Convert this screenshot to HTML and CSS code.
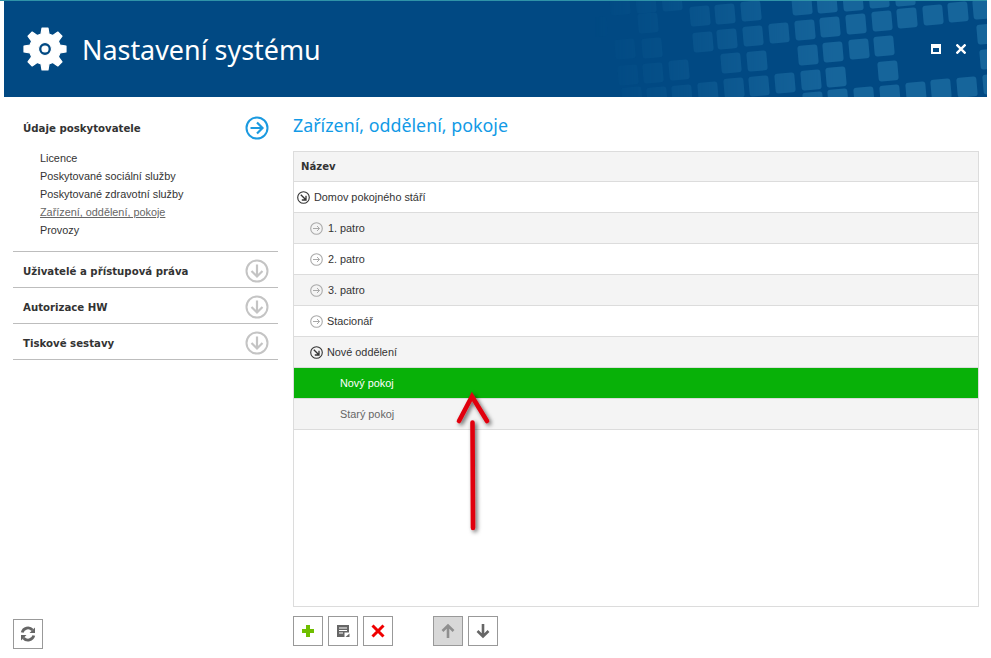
FILE: index.html
```html
<!DOCTYPE html>
<html lang="cs">
<head>
<meta charset="utf-8">
<title>Nastavení systému</title>
<link rel="stylesheet" href="styles.css">
</head>
<body>
<header class="header">
  <svg class="pattern" width="983" height="96" viewBox="4 1 983 96" aria-hidden="true">
    <defs><rect id="sq" x="-10" y="-10" width="20" height="20" rx="3" transform="rotate(-5)"/></defs>
    <g fill="#16659b">
      <use href="#sq" x="597" y="27"/><use href="#sq" x="620" y="5"/><use href="#sq" x="646" y="3"/><use href="#sq" x="672" y="1"/>
      <use href="#sq" x="648" y="23"/><use href="#sq" x="625" y="49"/><use href="#sq" x="652" y="48"/>
      <use href="#sq" x="628" y="75"/><use href="#sq" x="653" y="73"/><use href="#sq" x="679" y="70"/>
      <use href="#sq" x="632" y="97"/><use href="#sq" x="657" y="97"/><use href="#sq" x="682" y="95"/><use href="#sq" x="708" y="92"/><use href="#sq" x="734" y="88"/>
      <use href="#sq" x="700" y="16"/><use href="#sq" x="725" y="14"/><use href="#sq" x="751" y="11"/>
      <use href="#sq" x="802" y="5"/><use href="#sq" x="827" y="3"/><use href="#sq" x="853" y="1"/><use href="#sq" x="879" y="-2"/><use href="#sq" x="905" y="-4"/>
      <use href="#sq" x="805" y="30"/><use href="#sq" x="830" y="27"/><use href="#sq" x="856" y="24"/><use href="#sq" x="882" y="21"/><use href="#sq" x="907" y="18"/><use href="#sq" x="933" y="15"/><use href="#sq" x="958" y="12"/><use href="#sq" x="983" y="9"/>
      <use href="#sq" x="703" y="42"/><use href="#sq" x="727" y="39"/><use href="#sq" x="753" y="36"/><use href="#sq" x="779" y="33"/><use href="#sq" x="987" y="34"/>
      <use href="#sq" x="808" y="55"/><use href="#sq" x="833" y="52"/><use href="#sq" x="859" y="49"/><use href="#sq" x="884" y="46"/><use href="#sq" x="990" y="59"/>
      <use href="#sq" x="731" y="63"/><use href="#sq" x="757" y="61"/><use href="#sq" x="888" y="71"/>
      <use href="#sq" x="759" y="86"/><use href="#sq" x="785" y="83"/><use href="#sq" x="811" y="80"/><use href="#sq" x="836" y="77"/>
      <use href="#sq" x="813" y="102"/><use href="#sq" x="838" y="99"/><use href="#sq" x="864" y="97"/><use href="#sq" x="890" y="95"/><use href="#sq" x="916" y="92"/><use href="#sq" x="941" y="89"/><use href="#sq" x="967" y="87"/><use href="#sq" x="993" y="84"/>
    </g>
  </svg>
  <svg class="gear" width="44" height="44" viewBox="0 0 44 44" aria-hidden="true">
    <path fill="#fff" stroke="#fff" stroke-width="1.200" stroke-linejoin="round" fill-rule="evenodd" d="M19 1h6l1 6 3.800 1.600 5-3.600 4.200 4.200-3.600 5 1.600 3.800 6 1v6l-6 1-1.600 3.800 3.600 5-4.200 4.200-5-3.600-3.800 1.600-1 6h-6l-1-6-3.800-1.600-5 3.600-4.200-4.200 3.600-5-1.600-3.800-6-1v-6l6-1 1.600-3.800-3.600-5 4.200-4.200 5 3.600 3.800-1.600zM22 15.500a6.500 6.500 0 1 0 0 13 6.500 6.500 0 0 0 0-13zM22 19a3 3 0 1 1 0 6 3 3 0 0 1 0-6z"/>
  </svg>
  <h1 class="title">Nastavení systému</h1>
  <div class="window-buttons">
    <svg width="10" height="10" viewBox="0 0 10 10" aria-hidden="true"><path fill="#fff" fill-rule="evenodd" d="M0 0h10v10H0zM2 4v4h6V4z"/></svg>
    <svg width="10" height="10" viewBox="0 0 10 10" aria-hidden="true"><path stroke="#fff" stroke-width="2.400" d="M.5.5l9 9M9.500.5l-9 9"/></svg>
  </div>
</header>
<div class="body">
  <aside class="sidebar">
    <nav class="menu">
      <section class="group open">
        <div class="group-head">
          <span class="group-title">Údaje poskytovatele</span>
          <svg class="round" width="24" height="24" viewBox="0 0 24 24" aria-hidden="true"><circle cx="12" cy="12" r="10.500" fill="none" stroke="#1b9ae0" stroke-width="2"/><path fill="none" stroke="#1b9ae0" stroke-width="2.200" d="M5.500 12h12M12 6.500l5.500 5.500-5.500 5.500"/></svg>
        </div>
        <ul class="sublist">
          <li>Licence</li>
          <li>Poskytované sociální služby</li>
          <li>Poskytované zdravotní služby</li>
          <li class="current">Zařízení, oddělení, pokoje</li>
          <li>Provozy</li>
        </ul>
      </section>
      <section class="group">
        <div class="group-head">
          <span class="group-title">Uživatelé a přístupová práva</span>
          <svg class="round" width="24" height="24" viewBox="0 0 24 24" aria-hidden="true"><circle cx="12" cy="12" r="10.500" fill="none" stroke="#c4c4c4" stroke-width="2"/><path fill="none" stroke="#c4c4c4" stroke-width="2.200" d="M12 5.500v12M6.500 12l5.500 5.500 5.500-5.500"/></svg>
        </div>
      </section>
      <section class="group">
        <div class="group-head">
          <span class="group-title">Autorizace HW</span>
          <svg class="round" width="24" height="24" viewBox="0 0 24 24" aria-hidden="true"><circle cx="12" cy="12" r="10.500" fill="none" stroke="#c4c4c4" stroke-width="2"/><path fill="none" stroke="#c4c4c4" stroke-width="2.200" d="M12 5.500v12M6.500 12l5.500 5.500 5.500-5.500"/></svg>
        </div>
      </section>
      <section class="group">
        <div class="group-head">
          <span class="group-title">Tiskové sestavy</span>
          <svg class="round" width="24" height="24" viewBox="0 0 24 24" aria-hidden="true"><circle cx="12" cy="12" r="10.500" fill="none" stroke="#c4c4c4" stroke-width="2"/><path fill="none" stroke="#c4c4c4" stroke-width="2.200" d="M12 5.500v12M6.500 12l5.500 5.500 5.500-5.500"/></svg>
        </div>
      </section>
    </nav>
    <button class="tool refresh" type="button" aria-label="Obnovit">
      <svg width="18" height="18" viewBox="0 0 18 18" aria-hidden="true"><g fill="none" stroke="#666" stroke-width="2.800"><path d="M3.200 7.500A6 6 0 0 1 13.500 5"/><path d="M14.800 10.500A6 6 0 0 1 4.500 13"/></g><path fill="#666" d="M16 2.500v5.500h-5.500zM2 15.500V10h5.500z"/></svg>
    </button>
  </aside>
  <main class="content">
    <h2 class="page-title">Zařízení, oddělení, pokoje</h2>
    <div class="tree">
      <div class="tree-head">Název</div>
      <div class="row white">
        <svg class="node" width="13" height="13" viewBox="0 0 13 13" aria-hidden="true"><circle cx="6.500" cy="6.500" r="5.800" fill="none" stroke="#333" stroke-width="1.100"/><path fill="none" stroke="#333" stroke-width="1.300" d="M3.800 3.800l5 5M9 4.800V9H4.800"/></svg>
        <span>Domov pokojného stáří</span>
      </div>
      <div class="row level1 grey">
        <svg class="node" width="13" height="13" viewBox="0 0 13 13" aria-hidden="true"><circle cx="6.500" cy="6.500" r="5.800" fill="none" stroke="#aaa" stroke-width="1.100"/><path fill="none" stroke="#aaa" stroke-width="1" d="M3 6.500h6.500M7 4l2.500 2.500L7 9"/></svg>
        <span class="gap">1. patro</span>
      </div>
      <div class="row level1 white">
        <svg class="node" width="13" height="13" viewBox="0 0 13 13" aria-hidden="true"><circle cx="6.500" cy="6.500" r="5.800" fill="none" stroke="#aaa" stroke-width="1.100"/><path fill="none" stroke="#aaa" stroke-width="1" d="M3 6.500h6.500M7 4l2.500 2.500L7 9"/></svg>
        <span class="gap">2. patro</span>
      </div>
      <div class="row level1 grey">
        <svg class="node" width="13" height="13" viewBox="0 0 13 13" aria-hidden="true"><circle cx="6.500" cy="6.500" r="5.800" fill="none" stroke="#aaa" stroke-width="1.100"/><path fill="none" stroke="#aaa" stroke-width="1" d="M3 6.500h6.500M7 4l2.500 2.500L7 9"/></svg>
        <span class="gap">3. patro</span>
      </div>
      <div class="row level1 white">
        <svg class="node" width="13" height="13" viewBox="0 0 13 13" aria-hidden="true"><circle cx="6.500" cy="6.500" r="5.800" fill="none" stroke="#aaa" stroke-width="1.100"/><path fill="none" stroke="#aaa" stroke-width="1" d="M3 6.500h6.500M7 4l2.500 2.500L7 9"/></svg>
        <span>Stacionář</span>
      </div>
      <div class="row level1 grey">
        <svg class="node" width="13" height="13" viewBox="0 0 13 13" aria-hidden="true"><circle cx="6.500" cy="6.500" r="5.800" fill="none" stroke="#333" stroke-width="1.100"/><path fill="none" stroke="#333" stroke-width="1.300" d="M3.800 3.800l5 5M9 4.800V9H4.800"/></svg>
        <span>Nové oddělení</span>
      </div>
      <div class="row level2 selected"><span>Nový pokoj</span></div>
      <div class="row level2 grey muted"><span>Starý pokoj</span></div>
    </div>
    <div class="toolbar">
      <button class="tool" type="button" aria-label="Přidat">
        <svg width="14" height="14" viewBox="0 0 14 14" aria-hidden="true"><path fill="#6fbe00" d="M5 1h4v4h4v4H9v4H5V9H1V5h4z"/></svg>
      </button>
      <button class="tool" type="button" aria-label="Upravit">
        <svg width="14" height="14" viewBox="0 0 14 14" aria-hidden="true"><path fill="#666" fill-rule="evenodd" d="M1 1h12v7.500H8.500V13H1zM3 3.500v1h8v-1zM3 6v1h8V6zM3 8.500v1h4v-1zM9.500 13l4-3.500V13z"/></svg>
      </button>
      <button class="tool" type="button" aria-label="Smazat">
        <svg width="14" height="14" viewBox="0 0 14 14" aria-hidden="true"><path stroke="#f00000" stroke-width="3" d="M1.500 1.500l11 11M12.500 1.500l-11 11"/></svg>
      </button>
      <button class="tool disabled spaced" type="button" aria-label="Nahoru">
        <svg width="14" height="16" viewBox="0 0 14 16" aria-hidden="true"><path fill="none" stroke="#8f8f8f" stroke-width="2.600" d="M7 15V2.500M1.500 8L7 2.500 12.500 8"/></svg>
      </button>
      <button class="tool" type="button" aria-label="Dolů">
        <svg width="14" height="16" viewBox="0 0 14 16" aria-hidden="true"><path fill="none" stroke="#666" stroke-width="2.600" d="M7 1v12.500M1.500 8L7 13.500 12.500 8"/></svg>
      </button>
    </div>
    <svg class="annotation" width="60" height="160" viewBox="0 0 60 160" aria-hidden="true">
      <defs><filter id="shadow" x="-40%" y="-20%" width="180%" height="140%"><feDropShadow dx="2" dy="2" stdDeviation="2" flood-color="#000" flood-opacity="0.6"/></filter></defs>
      <g filter="url(#shadow)" fill="none" stroke="#e00010" stroke-width="4.600" stroke-linecap="round">
        <path d="M16 43L29 18.500 44 43" stroke-linejoin="miter"/>
        <path d="M29.500 44.500L30 150"/>
      </g>
    </svg>
  </main>
</div>
</body>
</html>
```

FILE: styles.css
```css
* { box-sizing: border-box; }
html, body { margin: 0; height: 100%; }
body {
  width: 991px;
  height: 658px;
  overflow: hidden;
  background: #fff;
  font-family: "Liberation Sans", sans-serif;
  font-size: 10.850px;
  color: #333;
  display: flex;
  flex-direction: column;
}
.header {
  position: relative;
  width: 987px;
  height: 97px;
  padding-left: 23px;
  display: flex;
  align-items: center;
  gap: 15px;
  background: #014983;
  border-top: 1px solid #2f93a8;
  box-shadow: inset 4px 0 0 #fff;
  overflow: hidden;
  flex: none;
}
.pattern {
  position: absolute;
  left: 4px;
  top: 0;
  -webkit-mask-image: linear-gradient(to right, transparent 590px, rgba(0, 0, 0, .25) 660px, #000 830px);
  mask-image: linear-gradient(to right, transparent 590px, rgba(0, 0, 0, .25) 660px, #000 830px);
}
.gear { position: relative; flex: none; }
.title {
  position: relative;
  margin: 0;
  font-family: "Noto Sans", sans-serif;
  font-weight: 400;
  font-size: 26.900px;
  color: #fff;
}
.window-buttons {
  position: absolute;
  right: 21px;
  top: 43px;
  display: flex;
  align-items: center;
  gap: 15px;
}
.window-buttons svg { display: block; }
.body { flex: 1; display: flex; min-height: 0; }
.sidebar {
  width: 293px;
  flex: none;
  padding: 0 15px 9px 13px;
  display: flex;
  flex-direction: column;
  justify-content: space-between;
}
.group { border-bottom: 1px solid #bdbdbd; }
.group-head {
  height: 35px;
  padding: 3px 9px 0 10px;
  display: flex;
  align-items: center;
  justify-content: space-between;
}
.group.open .group-head { height: 52px; padding-top: 10px; }
.group-title {
  font-family: "DejaVu Sans", sans-serif;
  font-weight: 700;
  font-size: 10.200px;
  color: #333;
}
.round { display: block; flex: none; }
.sublist {
  list-style: none;
  margin: 0;
  padding: 0 0 12px 27px;
  line-height: 18px;
}
.current { color: #666; text-decoration: underline; }
.refresh { align-self: flex-start; }
.content {
  position: relative;
  flex: 1;
  padding-right: 12px;
  display: flex;
  flex-direction: column;
}
.page-title {
  margin: 16px 0 13px;
  height: 25px;
  font-family: "Noto Sans", sans-serif;
  font-weight: 400;
  font-size: 17.850px;
  line-height: 25px;
  color: #129ae6;
}
.tree {
  height: 456px;
  border: 1px solid #dcdcdc;
  flex: none;
}
.tree-head {
  height: 30px;
  padding-left: 7px;
  display: flex;
  align-items: center;
  font-family: "DejaVu Sans", sans-serif;
  font-weight: 700;
  font-size: 10.100px;
  background: #f4f4f4;
  border-bottom: 1px solid #dcdcdc;
}
.row {
  height: 31px;
  padding-left: 3px;
  display: flex;
  align-items: center;
  gap: 4px;
  border-bottom: 1px solid #dcdcdc;
}
.row .gap { margin-left: 1px; }
.level1 { padding-left: 16px; }
.level2 { padding-left: 46px; }
.white { background: #fff; }
.grey { background: #f4f4f4; }
.selected { background: #08b108; color: #fff; }
.muted { color: #666; }
.node { flex: none; display: block; }
.toolbar { margin-top: 9px; display: flex; gap: 5px; }
.tool {
  width: 30px;
  height: 30px;
  padding: 0;
  display: flex;
  align-items: center;
  justify-content: center;
  background: #fff;
  border: 1px solid #999;
  border-radius: 0;
}
.tool.disabled { background: #d8d8d8; }
.tool.spaced { margin-left: 35px; }
.annotation {
  position: absolute;
  left: 150px;
  top: 281px;
  pointer-events: none;
}
```
